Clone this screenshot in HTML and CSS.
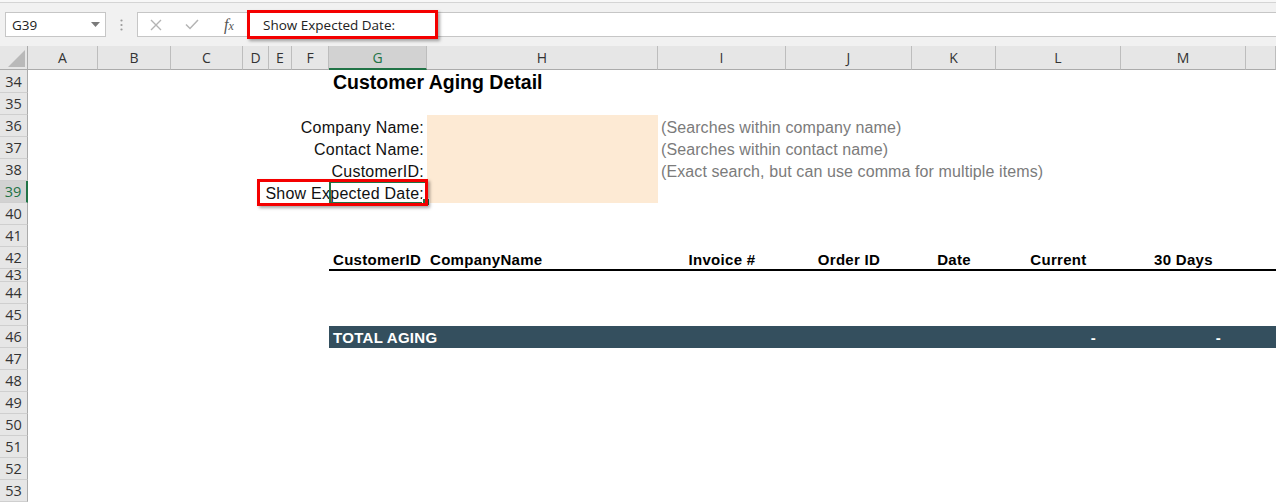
FILE: index.html
```html
<!DOCTYPE html>
<html>
<head>
<meta charset="utf-8">
<link rel="stylesheet" href="styles.css">
</head>
<body>
<div class="fbar">
  <div class="namebox">
    <span>G39</span>
    <svg class="dd" width="9" height="5" viewBox="0 0 9 5"><path d="M0 0H9L4.5 5Z" fill="#7a7a7a"/></svg>
  </div>
  <div class="grip">
    <svg width="3" height="12" viewBox="0 0 3 12"><circle cx="1.5" cy="1.5" r="1.1" fill="#9a9a9a"/><circle cx="1.5" cy="6" r="1.1" fill="#9a9a9a"/><circle cx="1.5" cy="10.5" r="1.1" fill="#9a9a9a"/></svg>
  </div>
  <div class="formula">
    <div class="fbtn"><svg width="12" height="12" viewBox="0 0 12 12"><path d="M1 1L11 11M11 1L1 11" stroke="#b4b4b4" stroke-width="1.4" fill="none"/></svg></div>
    <div class="fbtn"><svg width="14" height="11" viewBox="0 0 14 11"><path d="M1 5.5L5 9.5L13 1" stroke="#b4b4b4" stroke-width="1.5" fill="none"/></svg></div>
    <div class="fbtn fx"><span class="fx-f">f</span><span class="fx-x">x</span></div>
    <div class="ftext">Show Expected Date:</div>
  </div>
  <div class="redbox red-formula"></div>
</div>

<div class="sheet">
  <div class="corner"><svg width="17" height="17" viewBox="0 0 17 17"><path d="M17 0V17H0Z" fill="#b9b9b9"/></svg></div>
  <div class="ch">A</div>
  <div class="ch">B</div>
  <div class="ch">C</div>
  <div class="ch">D</div>
  <div class="ch">E</div>
  <div class="ch">F</div>
  <div class="ch sel">G</div>
  <div class="ch">H</div>
  <div class="ch">I</div>
  <div class="ch">J</div>
  <div class="ch">K</div>
  <div class="ch">L</div>
  <div class="ch">M</div>
  <div class="ch"></div>

  <div class="rh">34</div>
  <div class="rh">35</div>
  <div class="rh">36</div>
  <div class="rh">37</div>
  <div class="rh">38</div>
  <div class="rh sel">39</div>
  <div class="rh">40</div>
  <div class="rh">41</div>
  <div class="rh">42</div>
  <div class="rh short">43</div>
  <div class="rh">44</div>
  <div class="rh">45</div>
  <div class="rh">46</div>
  <div class="rh">47</div>
  <div class="rh">48</div>
  <div class="rh">49</div>
  <div class="rh">50</div>
  <div class="rh">51</div>
  <div class="rh">52</div>
  <div class="rh">53</div>

  <div class="title">Customer Aging Detail</div>

  <div class="form">
    <div class="lbl">Company Name:</div><div class="hint">(Searches within company name)</div>
    <div class="lbl">Contact Name:</div><div class="hint">(Searches within contact name)</div>
    <div class="lbl">CustomerID:</div><div class="hint">(Exact search, but can use comma for multiple items)</div>
    <div class="lbl">Show Expected Date:</div><div class="hint"></div>
    <div class="peach"></div>
  </div>

  <div class="selbox"></div>

  <div class="thead">
    <div class="th left">CustomerID</div>
    <div class="th left2">CompanyName</div>
    <div class="th">Invoice #</div>
    <div class="th">Order ID</div>
    <div class="th">Date</div>
    <div class="th">Current</div>
    <div class="th">30 Days</div>
    <div class="th"></div>
  </div>
  <div class="rule"></div>

  <div class="total">
    <div class="tl">TOTAL AGING</div>
    <div class="dash l">-</div>
    <div class="dash m">-</div>
  </div>

  <div class="redbox red-cell"></div>
</div>
</body>
</html>
```

FILE: styles.css
```css
* { box-sizing: border-box; margin: 0; padding: 0; }
html, body { width: 1276px; height: 503px; overflow: hidden; background: #fff; }
body { font-family: "Liberation Sans", Arial, sans-serif; }

/* formula bar */
.fbar {
  position: relative;
  height: 46px;
  background: linear-gradient(#f7f7f7 0 2px, #d4d4d4 2px 3px, #f1f1f1 3px);
  display: flex;
  align-items: flex-start;
  padding-top: 12px;
}
.namebox {
  margin-left: 5px;
  width: 101px;
  height: 25px;
  background: #fff;
  border: 1px solid #c6c6c6;
  display: flex;
  align-items: center;
  justify-content: space-between;
  padding: 0 5px 0 6px;
  font-family: "Open Sans", sans-serif;
  font-size: 13.5px;
  color: #222;
}
.grip { width: 31px; height: 25px; display: flex; align-items: center; justify-content: center; }
.formula {
  flex: 1;
  height: 25px;
  background: #fff;
  border: 1px solid #c6c6c6;
  border-right: none;
  display: flex;
  align-items: center;
}
.fbtn { width: 36px; height: 100%; display: flex; align-items: center; justify-content: center; }
.fbtn.fx { width: 38px; font-family: "Liberation Serif", serif; font-style: italic; color: #555; }
.fx-f { font-size: 16px; }
.fx-x { font-size: 12px; margin-top: 4px; }
.ftext {
  padding-left: 15px;
  font-family: "Open Sans", sans-serif;
  font-size: 13.5px;
  color: #222;
  white-space: nowrap;
}

.redbox {
  position: absolute;
  border: 3px solid #f40000;
  box-shadow: 2px 2px 3px rgba(0, 0, 0, 0.35);
  z-index: 5;
}
.red-formula { left: 247px; top: 10px; width: 191px; height: 29px; }
.red-cell { left: 257px; top: 133px; width: 171px; height: 27px; }

/* sheet */
.sheet {
  position: relative;
  display: grid;
  grid-template-columns: 28px 70px 73px 72px 26px 23px 37px 98px 231px 128px 126px 84px 125px 125px 1fr;
  grid-template-rows: 24px 23px repeat(8, 22px) 13px repeat(10, 22px);
}
.corner {
  grid-row: 1; grid-column: 1;
  background: #e6e6e6;
  border-right: 1px solid #ababab;
  border-bottom: 1px solid #ababab;
  display: flex; align-items: flex-end; justify-content: flex-end;
  padding: 0 2px 2px 0;
}
.ch {
  grid-row: 1;
  background: #e6e6e6;
  border-right: 1px solid #bdbdbd;
  border-bottom: 1px solid #ababab;
  display: flex; align-items: center; justify-content: center;
  font-family: "Open Sans", sans-serif;
  font-size: 14px;
  color: #333;
}
.ch.sel { background: #d2d2d2; color: #217346; border-bottom: 2px solid #217346; }
.rh {
  grid-column: 1;
  background: #e6e6e6;
  border-right: 1px solid #ababab;
  border-bottom: 1px solid #cfcfcf;
  display: flex; align-items: center; justify-content: center;
  font-family: "Open Sans", sans-serif;
  font-size: 14.5px;
  color: #333;
  overflow: hidden;
}
.rh.sel { background: #d2d2d2; color: #217346; border-right: 2px solid #217346; }
.rh.short { align-items: flex-end; line-height: 12px; }

.title, .lbl, .hint, .th, .tl, .dash {
  display: flex;
  align-items: flex-end;
  white-space: nowrap;
}

.title {
  grid-row: 2; grid-column: 8 / 16;
  padding-left: 4px;
  font-weight: bold;
  font-size: 19.5px;
  line-height: 22px;
  color: #000;
}

.form {
  grid-row: 4 / 8; grid-column: 2 / 16;
  display: grid;
  grid-template-columns: 399px 231px 1fr;
  grid-template-rows: repeat(4, 22px);
  font-size: 16px;
  letter-spacing: 0.25px;
  line-height: 18px;
}
.lbl { grid-column: 1; justify-content: flex-end; padding-right: 3px; color: #111; position: relative; z-index: 1; }
.hint { grid-column: 3; padding-left: 3px; color: #7b7b7b; letter-spacing: 0.1px; }
.peach { grid-column: 2; grid-row: 1 / 5; background: #fdead4; }

.selbox {
  grid-row: 7; grid-column: 8;
  margin: 0 -1px -1px 0;
  border: 2px solid #217346;
  position: relative;
  z-index: 3;
}
.selbox::after {
  content: "";
  position: absolute;
  right: -4px; bottom: -4px;
  width: 6px; height: 6px;
  background: #217346;
  border: 1px solid #fff;
}

.thead, .total {
  grid-column: 8 / 16;
  display: grid;
  grid-template-columns: 98px 231px 128px 126px 84px 125px 125px 1fr;
  font-weight: bold;
  font-size: 15px;
  letter-spacing: 0.3px;
  line-height: 18px;
}
.thead { grid-row: 10; color: #000; }
.th { justify-content: center; }
.th.left { justify-content: flex-start; padding-left: 4px; }
.th.left2 { justify-content: flex-start; padding-left: 3px; }
.rule { grid-row: 11; grid-column: 8 / 16; border-top: 2px solid #000; }

.total { grid-row: 14; background: #344f5e; color: #fff; padding-bottom: 1px; }
.tl { grid-column: 1 / 3; padding-left: 4px; }
.dash { justify-content: flex-end; padding-right: 25px; }
.dash.l { grid-column: 6; }
.dash.m { grid-column: 7; }
```
